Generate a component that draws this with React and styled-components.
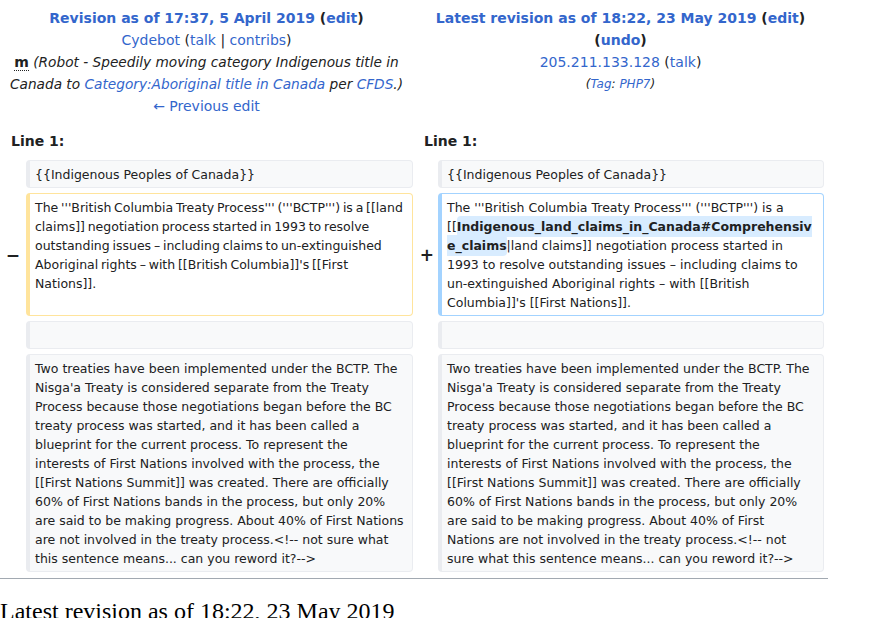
import React from 'react'
import styled, { createGlobalStyle } from 'styled-components'

const GlobalStyle = createGlobalStyle`
    body {
        margin: 0;
        background: #ffffff;
        font-family: "DejaVu Sans", sans-serif;
        color: #202122;
    }
`;

const Page = styled.div`
    width: 828px;
`;

const HeaderRow = styled.div`
    display: grid;
    grid-template-columns: 413px 415px;
    padding-top: 7px;
`;

const HeaderCell = styled.div`
    text-align: center;
    font-size: 14px;
    line-height: 22px;
    padding: 0 4px;
`;

const Line = styled.div`
    font-weight: ${p => (p.bold ? 'bold' : 'normal')};
    font-size: ${p => (p.small ? '12px' : '14px')};
    font-style: ${p => (p.italic ? 'italic' : 'normal')};
`;

const Link = styled.a`
    color: #3366cc;
    text-decoration: none;
`;

const Minor = styled.abbr`
    font-weight: bold;
    text-decoration: none;
    border-bottom: 1px dotted #202122;
    cursor: help;
`;

const Comment = styled.span`
    font-style: italic;
    font-size: 13.7px;
    color: #222222;
`;

const LabelRow = styled.div`
    display: grid;
    grid-template-columns: 413px 415px;
    margin-top: 13px;
    margin-bottom: 8px;
`;

const LineNo = styled.div`
    font-size: 14px;
    font-weight: bold;
    line-height: 22px;
    padding-left: 11px;
`;

const Body = styled.div`
    display: grid;
    grid-template-columns: 26px 387px 25px 386px;
    row-gap: 5px;
`;

const Marker = styled.div`
    display: flex;
    align-items: center;
    justify-content: flex-end;
    padding-right: ${p => (p.right ? '4px' : '6px')};
    font-size: 17px;
    font-weight: bold;
`;

const borders = {
    context: '#eaecf0',
    deleted: '#ffe49c',
    added: '#a3d3ff',
};

const Content = styled.div`
    box-sizing: border-box;
    background: ${p => (p.kind === 'context' ? '#f8f9fa' : '#ffffff')};
    border: 1px solid ${p => borders[p.kind]};
    border-left: 4px solid ${p => borders[p.kind]};
    border-radius: 4px;
    padding: 3.5px ${p => (p.right ? '8px' : '6px')} 3.5px 5px;
    font-size: 12.5px;
    line-height: 19px;
    word-spacing: ${p => (p.kind === 'deleted' ? '-1.2px' : 'normal')};
    color: #202122;
    overflow-wrap: anywhere;
    min-height: 28px;
`;

const Ins = styled.ins`
    text-decoration: none;
    font-weight: bold;
    background: #d8ecff;
    border-radius: 4px;
    padding: 3px 0;
`;

const Rule = styled.hr`
    border: none;
    border-top: 1px solid #a2a9b1;
    margin: 6px 0 0 0;
    height: 0;
`;

const Heading = styled.h2`
    font-family: "Liberation Serif", serif;
    font-weight: normal;
    font-size: 24px;
    margin: 19px 0 0 0;
    color: #000000;
`;

const para = "Two treaties have been implemented under the BCTP. The Nisga'a Treaty is considered separate from the Treaty Process because those negotiations began before the BC treaty process was started, and it has been called a blueprint for the current process. To represent the interests of First Nations involved with the process, the [[First Nations Summit]] was created. There are officially 60% of First Nations bands in the process, but only 20% are said to be making progress. About 40% of First Nations are not involved in the treaty process.<!-- not sure what this sentence means... can you reword it?-->";

const App = () => {
    return (
        <Page>
            <GlobalStyle />
            <HeaderRow>
                <HeaderCell>
                    <Line bold>
                        <Link href="#">Revision as of 17:37, 5 April 2019</Link> (<Link href="#">edit</Link>)
                    </Line>
                    <Line>
                        <Link href="#">Cydebot</Link> (<Link href="#">talk</Link> | <Link href="#">contribs</Link>)
                    </Line>
                    <Line>
                        <Minor title="This is a minor edit">m</Minor>{' '}
                        <Comment>
                            (Robot - Speedily moving category Indigenous title in Canada to{' '}
                            <Link href="#">Category:Aboriginal title in Canada</Link> per{' '}
                            <Link href="#">CFDS</Link>.)
                        </Comment>
                    </Line>
                    <Line>
                        <Link href="#">← Previous edit</Link>
                    </Line>
                </HeaderCell>
                <HeaderCell>
                    <Line bold>
                        <Link href="#">Latest revision as of 18:22, 23 May 2019</Link> (<Link href="#">edit</Link>) (<Link href="#">undo</Link>)
                    </Line>
                    <Line>
                        <Link href="#">205.211.133.128</Link> (<Link href="#">talk</Link>)
                    </Line>
                    <Line small italic>
                        (<Link href="#">Tag</Link>: <Link href="#">PHP7</Link>)
                    </Line>
                </HeaderCell>
            </HeaderRow>

            <LabelRow>
                <LineNo>Line 1:</LineNo>
                <LineNo>Line 1:</LineNo>
            </LabelRow>

            <Body>
                <Marker />
                <Content kind="context">{'{{Indigenous Peoples of Canada}}'}</Content>
                <Marker right />
                <Content kind="context" right>{'{{Indigenous Peoples of Canada}}'}</Content>

                <Marker>−</Marker>
                <Content kind="deleted">
                    The '''British Columbia Treaty Process''' ('''BCTP''') is a [[land claims]] negotiation process started in 1993 to resolve outstanding issues – including claims to un-extinguished Aboriginal rights – with [[British Columbia]]'s [[First Nations]].
                </Content>
                <Marker right>+</Marker>
                <Content kind="added" right>
                    The '''British Columbia Treaty Process''' ('''BCTP''') is a [[<Ins>Indigenous_land_claims_in_Canada#Comprehensive_claims</Ins>|land claims]] negotiation process started in 1993 to resolve outstanding issues – including claims to un-extinguished Aboriginal rights – with [[British Columbia]]'s [[First Nations]].
                </Content>

                <Marker />
                <Content kind="context" />
                <Marker right />
                <Content kind="context" right />

                <Marker />
                <Content kind="context">{para}</Content>
                <Marker right />
                <Content kind="context" right>{para}</Content>
            </Body>

            <Rule />
            <Heading>Latest revision as of 18:22, 23 May 2019</Heading>
        </Page>
    )
}

export default App;
